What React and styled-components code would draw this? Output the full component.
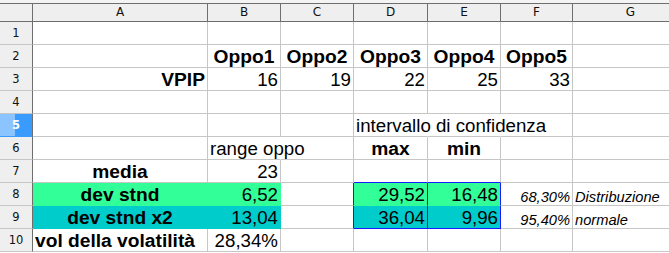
import React from "react";
import styled, { createGlobalStyle } from "styled-components";

const GlobalStyle = createGlobalStyle`
  html, body {
    margin: 0;
    padding: 0;
    background: #ffffff;
    overflow: hidden;
  }
`;

const GREEN = "#33ff99";
const TEAL = "#00cccc";
const BLUE = "#1a1aff";
const GRID = "#c6c6c6";
const DARK = "#6e6e6e";

const COLS = ["A", "B", "C", "D", "E", "F", "G"];
const WIDTHS = [175, 73, 73, 74, 73, 72, 116];

const TopStrip = styled.div`
  height: 3px;
  background: #f4f4f4;
`;

const Sheet = styled.div`
  display: grid;
  grid-template-columns: 33px ${WIDTHS.map((w) => w + "px").join(" ")};
  grid-template-rows: 18px;
  grid-auto-rows: 23px;
  border-top: 1px solid ${DARK};
  width: max-content;
`;

const ColHead = styled.div`
  box-sizing: border-box;
  height: 18px;
  background: #efefef;
  border-right: 1px solid ${DARK};
  border-bottom: 1px solid ${DARK};
  font-family: "DejaVu Sans", sans-serif;
  font-size: 12px;
  line-height: 17px;
  text-align: center;
  color: #111;
`;

const RowHead = styled.div`
  box-sizing: border-box;
  background: ${(p) =>
    p.$active
      ? "linear-gradient(to right, #8cc4ff 0 47%, #3a9bff 47% 100%)"
      : "#efefef"};
  border-right: 1px solid ${DARK};
  border-bottom: 1px solid ${(p) => (p.$active ? "#3a9bff" : GRID)};
  font-family: "DejaVu Sans", sans-serif;
  font-size: 11.5px;
  line-height: 22px;
  text-align: center;
  color: ${(p) => (p.$active ? "#ffffff" : "#111")};
  font-weight: ${(p) => (p.$active ? 700 : 400)};
`;

const Cell = styled.div`
  box-sizing: border-box;
  display: flex;
  align-items: flex-end;
  justify-content: ${(p) =>
    p.$align === "right"
      ? "flex-end"
      : p.$align === "center"
      ? "center"
      : "flex-start"};
  padding: 0 2px;
  background: ${(p) => p.$fill || "transparent"};
  border-right: 1px solid ${(p) => p.$r || p.$fill || GRID};
  border-bottom: 1px solid ${(p) => p.$b || p.$fill || GRID};
  font-family: "Liberation Sans", Arial, sans-serif;
  font-size: ${(p) => (p.$small ? "14.67px" : p.$bold ? "19.2px" : "18.7px")};
  line-height: ${(p) => (p.$small ? "16px" : "20.5px")};
  font-weight: ${(p) => (p.$bold ? 700 : 400)};
  font-style: ${(p) => (p.$italic ? "italic" : "normal")};
  white-space: nowrap;
  overflow: visible;
  color: #000;
`;

const c = (text, opts = {}) => ({ text, ...opts });
const num = (text, opts = {}) => ({ text, align: "right", ...opts });
const head = (text) => ({ text, bold: true, align: "center" });

const rows = [
  {},
  { B: head("Oppo1"), C: head("Oppo2"), D: head("Oppo3"), E: head("Oppo4"), F: head("Oppo5") },
  {
    A: c("VPIP", { bold: true, align: "right" }),
    B: num("16"),
    C: num("19"),
    D: num("22"),
    E: num("25"),
    F: num("33"),
  },
  {},
  { D: c("intervallo di confidenza", { r: "transparent" }), E: c("", { r: "transparent" }) },
  {
    B: c("range oppo", { r: "transparent" }),
    D: head("max"),
    E: head("min"),
  },
  {
    A: c("media", { bold: true, align: "center" }),
    B: num("23"),
    D: c("", { b: BLUE }),
    E: c("", { b: BLUE }),
  },
  {
    A: c("dev stnd", { bold: true, align: "center", fill: GREEN }),
    B: num("6,52", { fill: GREEN }),
    C: c("", { r: BLUE }),
    D: num("29,52", { fill: GREEN, r: BLUE }),
    E: num("16,48", { fill: GREEN, r: BLUE }),
    F: num("68,30%", { italic: true, small: true }),
    G: c("Distribuzione", { italic: true, small: true }),
  },
  {
    A: c("dev stnd x2", { bold: true, align: "center", fill: TEAL }),
    B: num("13,04", { fill: TEAL }),
    C: c("", { r: BLUE }),
    D: num("36,04", { fill: TEAL, r: BLUE, b: BLUE }),
    E: num("9,96", { fill: TEAL, r: BLUE, b: BLUE }),
    F: num("95,40%", { italic: true, small: true }),
    G: c("normale", { italic: true, small: true }),
  },
  {
    A: c("vol della volatilità", { bold: true }),
    B: num("28,34%"),
  },
];

export default function App() {
  return (
    <>
      <GlobalStyle />
      <TopStrip />
      <Sheet>
        <ColHead />
        {COLS.map((col) => (
          <ColHead key={col}>{col}</ColHead>
        ))}
        {rows.map((row, i) => (
          <React.Fragment key={i}>
            <RowHead $active={i === 4}>{i + 1}</RowHead>
            {COLS.map((col) => {
              const cell = row[col] || {};
              return (
                <Cell
                  key={col}
                  $align={cell.align}
                  $bold={cell.bold}
                  $italic={cell.italic}
                  $small={cell.small}
                  $fill={cell.fill}
                  $r={cell.r}
                  $b={cell.b}
                >
                  {cell.text}
                </Cell>
              );
            })}
          </React.Fragment>
        ))}
      </Sheet>
    </>
  );
}
